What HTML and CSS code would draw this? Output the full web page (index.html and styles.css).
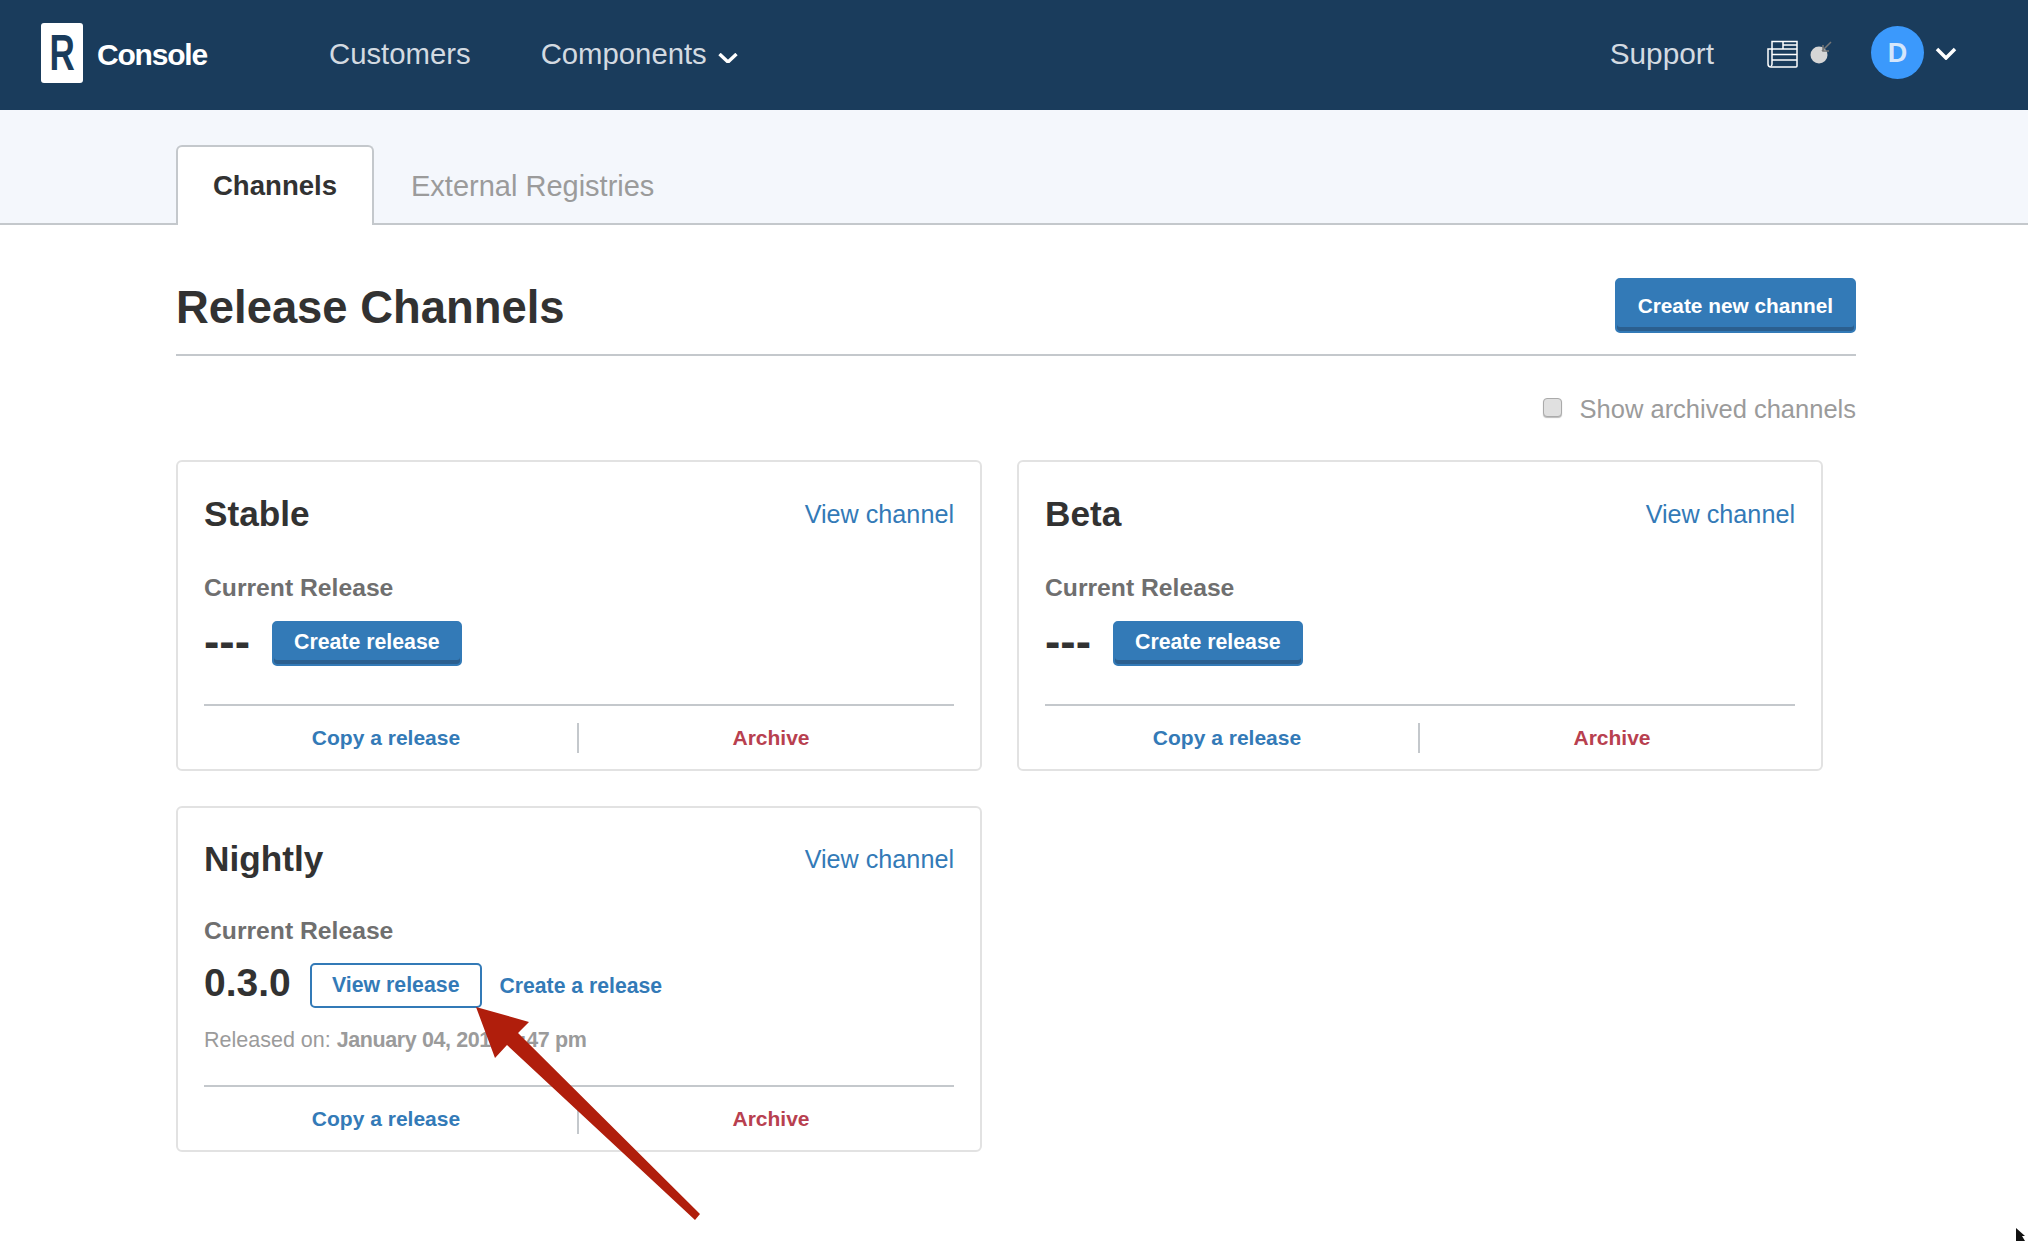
FILE: index.html
```html
<!DOCTYPE html>
<html lang="en">
<head>
    <meta charset="UTF-8">
    <meta name="viewport" content="width=device-width, initial-scale=1.0">
    <title>Release Channels</title>
    <link rel="stylesheet" href="styles.css">
</head>
<body>

<header class="topbar">
    <a class="logo" href="#">
        <span class="logo-mark"><span class="logo-letter">R</span></span>
        <span class="logo-text">Console</span>
    </a>
    <nav class="nav-main">
        <a href="#">Customers</a>
        <a href="#">Components
            <svg class="nav-chevron" viewBox="0 0 20 10"><path d="M1.5 1l8.5 8 8.5-8"/></svg>
        </a>
    </nav>
    <div class="nav-right">
        <a class="nav-support" href="#">Support</a>
        <svg class="news-icon" viewBox="0 0 31 28">
            <path d="M5 1.500h25v24.500a1 1 0 0 1-1 1H4a3 3 0 0 1-3-3V9h4z"/>
            <path d="M5 9v15a2 2 0 0 1-1 2M5 9h25M5 14.500h25M5 20h25M16 1.500V9M16 5h14"/>
        </svg>
        <svg class="bomb-icon" viewBox="0 0 22 24">
            <circle cx="9" cy="15" r="8.500"/>
            <path d="M12 11l9-9M13 5v6h6"/>
        </svg>
        <span class="avatar">D</span>
        <svg class="user-chevron" viewBox="0 0 22 13"><path d="M2 2l9 9 9-9"/></svg>
    </div>
</header>

<div class="tabs">
    <a class="tab tab-active" href="#">Channels</a>
    <a class="tab" href="#">External Registries</a>
</div>

<main class="content">
    <div class="page-head">
        <h1>Release Channels</h1>
        <button class="btn btn-large" type="button">Create new channel</button>
    </div>

    <label class="archived-toggle">
        <span class="fake-check"></span>
        Show archived channels
    </label>

    <div class="channels">
        <section class="card">
            <div class="card-head">
                <h2>Stable</h2>
                <a href="#">View channel</a>
            </div>
            <div class="card-label">Current Release</div>
            <div class="release-row">
                <span class="no-release">---</span>
                <button class="btn" type="button">Create release</button>
            </div>
            <div class="card-foot">
                <a href="#">Copy a release</a>
                <a class="danger" href="#">Archive</a>
            </div>
        </section>

        <section class="card">
            <div class="card-head">
                <h2>Beta</h2>
                <a href="#">View channel</a>
            </div>
            <div class="card-label">Current Release</div>
            <div class="release-row">
                <span class="no-release">---</span>
                <button class="btn" type="button">Create release</button>
            </div>
            <div class="card-foot">
                <a href="#">Copy a release</a>
                <a class="danger" href="#">Archive</a>
            </div>
        </section>

        <section class="card card-released">
            <div class="card-head">
                <h2>Nightly</h2>
                <a href="#">View channel</a>
            </div>
            <div class="card-label">Current Release</div>
            <div class="release-row">
                <span class="version">0.3.0</span>
                <button class="btn btn-outline" type="button">View release</button>
                <a class="create-link" href="#">Create a release</a>
            </div>
            <div class="released-on">Released on: <b>January 04, 2017 4:47 pm</b></div>
            <div class="card-foot">
                <a href="#">Copy a release</a>
                <a class="danger" href="#">Archive</a>
            </div>
        </section>
    </div>
</main>

<!-- annotation drawn on top of the screenshot -->
<svg class="annotation" viewBox="0 0 2028 1241">
    <polygon class="arrow" points="476,1007 529,1022 518,1033 700,1214 695,1220 507,1045 495,1058"/>
    <path class="cursor" d="M2016 1228v13h9l-3-5h3z"/>
</svg>

</body>
</html>
```

FILE: styles.css
```css
html, body {
    margin: 0;
    height: 1241px;
    overflow: hidden;
}

body {
    position: relative;
    font-family: "Liberation Sans", Arial, sans-serif;
    color: #323232;
    background-color: #fff;
}

a {
    text-decoration: none;
    color: #337ab7;
}

/* top bar */
.topbar {
    display: flex;
    align-items: center;
    height: 110px;
    padding: 0 0 3px 41px;
    box-sizing: border-box;
    background-color: #1a3c5c;
}

.logo {
    display: flex;
    align-items: center;
    width: 288px;
    margin-top: -1px;
}

.logo-mark {
    width: 42px;
    height: 60px;
    border-radius: 3px;
    background-color: #fff;
    color: #1a3c5c;
    font-size: 50px;
    font-weight: bold;
    line-height: 60px;
    text-align: center;
}

.logo-letter {
    display: inline-block;
    transform: scaleX(0.7);
}

.logo-text {
    margin: 4px 0 0 14px;
    color: #fff;
    font-size: 30px;
    font-weight: bold;
    letter-spacing: -1.200px;
}

.nav-main {
    display: flex;
    gap: 70px;
}

.nav-main a, .nav-support {
    color: #d3dae1;
    font-size: 29.300px;
}

.nav-chevron {
    width: 20px;
    height: 10px;
    margin: 0 0 1px 3px;
    fill: none;
    stroke: #fff;
    stroke-width: 3.400;
}

.nav-right {
    display: flex;
    align-items: center;
    margin-left: auto;
    padding-right: 71px;
}

.nav-right .nav-support {
    font-size: 29.800px;
}

.news-icon {
    width: 31px;
    height: 28px;
    margin-left: 53px;
    fill: none;
    stroke: #fff;
    stroke-width: 1.500;
}

.bomb-icon {
    width: 22px;
    height: 24px;
    margin: -4px 0 0 12px;
}

.bomb-icon circle {
    fill: #d6d6d6;
}

.bomb-icon path {
    fill: none;
    stroke: #777;
    stroke-width: 1.500;
}

.avatar {
    width: 53px;
    height: 53px;
    margin: -2px 0 0 39px;
    border-radius: 50%;
    background-color: #3b99fc;
    color: #d5e6fb;
    font-size: 27px;
    font-weight: bold;
    line-height: 55px;
    text-align: center;
}

.user-chevron {
    width: 22px;
    height: 13px;
    margin-left: 11px;
    fill: none;
    stroke: #fff;
    stroke-width: 3.500;
}

/* tabs */
.tabs {
    display: flex;
    align-items: flex-end;
    height: 115px;
    padding-left: 176px;
    box-sizing: border-box;
    border-bottom: 2px solid #c4c8cc;
    background-color: #f4f7fc;
}

.tab {
    padding: 2px 37px 0;
    height: 78px;
    box-sizing: border-box;
    color: #9b9b9b;
    font-size: 29px;
    line-height: 78px;
}

.tab-active {
    width: 198px;
    padding: 0;
    margin-bottom: -2px;
    height: 80px;
    border: 2px solid #c4c8cc;
    border-bottom: none;
    border-radius: 6px 6px 0 0;
    background-color: #fff;
    color: #323232;
    font-size: 27.600px;
    font-weight: bold;
    text-align: center;
}

/* page */
.content {
    padding: 0 172px 0 176px;
}

.page-head {
    display: flex;
    align-items: center;
    justify-content: space-between;
    padding: 53px 0 21px;
    border-bottom: 2px solid #c4c8cc;
}

h1 {
    margin: 2px 0 -2px;
    font-size: 45.400px;
    line-height: 55px;
}

.btn {
    height: 45px;
    padding: 0 20px 2px;
    border: 2px solid #337ab7;
    border-radius: 5px;
    background-color: #337ab7;
    box-shadow: inset 0 -4px 0 #2b5f8f;
    color: #fff;
    font-family: inherit;
    font-size: 21.300px;
    font-weight: bold;
}

.btn-large {
    height: 55px;
    padding: 0 21px;
    font-size: 20.800px;
}

.btn-outline {
    padding: 0 20px 1px;
    background-color: #fff;
    box-shadow: none;
    color: #337ab7;
}

.archived-toggle {
    display: flex;
    align-items: center;
    justify-content: flex-end;
    gap: 18px;
    height: 30px;
    margin-top: 38px;
    color: #9b9b9b;
    font-size: 25.500px;
}

.fake-check {
    width: 19px;
    height: 19px;
    margin-top: -4px;
    box-sizing: border-box;
    border: 1px solid #aaa;
    border-radius: 4px;
    background-color: #e0e0e0;
    box-shadow: 0 1px 1px #bbb;
}

.channels {
    display: flex;
    flex-wrap: wrap;
    gap: 35px;
    margin-top: 36px;
}

.card {
    width: 806px;
    padding: 31px 26px 0;
    box-sizing: border-box;
    border: 2px solid #e2e2e2;
    border-radius: 6px;
}

.card-head {
    display: flex;
    align-items: center;
    justify-content: space-between;
    height: 42px;
    font-size: 25.200px;
}

h2 {
    margin: 0;
    font-size: 35.200px;
}

.card-label {
    margin-top: 38px;
    color: #6f6f6f;
    font-size: 24.700px;
    font-weight: bold;
    line-height: 30px;
}

.release-row {
    display: flex;
    align-items: center;
    margin-top: 18px;
    height: 45px;
}

.no-release {
    width: 68px;
    margin-top: -4px;
    font-size: 46px;
    font-weight: bold;
    line-height: 45px;
}

.version {
    width: 106px;
    margin-top: -6px;
    font-size: 39px;
    font-weight: bold;
}

.create-link {
    margin-left: 18px;
    font-size: 21.200px;
    font-weight: bold;
}

.released-on {
    margin-top: 17px;
    color: #9b9b9b;
    font-size: 21.500px;
    line-height: 30px;
}

.released-on b {
    letter-spacing: -0.400px;
}

.card-foot {
    display: flex;
    margin-top: 38px;
    padding: 17px 0 16px;
    border-top: 2px solid #c4c8cc;
    font-size: 21px;
    font-weight: bold;
    line-height: 30px;
}

.card-foot a {
    flex: 1;
    text-align: center;
}

.card-foot a:first-child {
    flex: 0 0 375px;
    box-sizing: border-box;
    border-right: 2px solid #c4c8cc;
    padding-right: 9px;
}

.card-foot .danger {
    padding-left: 9px;
    color: #b8404f;
}

.card-released {
    padding-top: 30px;
}

.card-released .card-label {
    margin-top: 36px;
}

.card-released .release-row {
    margin-top: 17px;
}

.card-released .card-foot {
    margin-top: 30px;
}

/* overlay */
.annotation {
    position: absolute;
    left: 0;
    top: 0;
    width: 2028px;
    height: 1241px;
    pointer-events: none;
}

.arrow {
    fill: #b01e0c;
}

.cursor {
    fill: #111;
}
```
